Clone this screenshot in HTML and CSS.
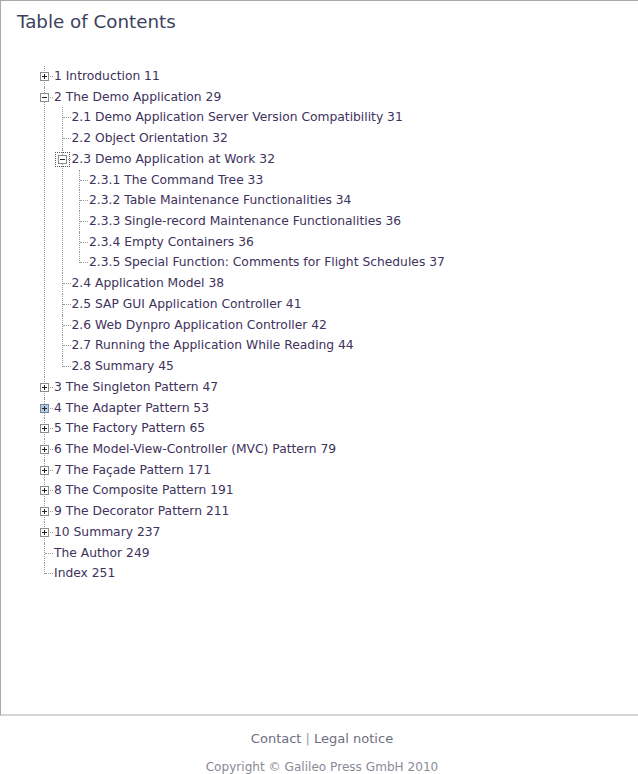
FILE: index.html
```html
<!DOCTYPE html>
<html>
<head>
<meta charset="utf-8">
<link rel="stylesheet" href="styles.css">
</head>
<body>
<div class="panel">
  <h1 class="title">Table of Contents</h1>
  <ul class="tree">
    <li><span class="toggle plus"></span><a class="row">1 Introduction 11</a></li>
    <li><span class="toggle minus"></span><a class="row">2 The Demo Application 29</a>
      <ul>
        <li><a class="row">2.1 Demo Application Server Version Compatibility 31</a></li>
        <li><a class="row">2.2 Object Orientation 32</a></li>
        <li><span class="toggle minus focus"></span><a class="row">2.3 Demo Application at Work 32</a>
          <ul>
            <li><a class="row">2.3.1 The Command Tree 33</a></li>
            <li><a class="row">2.3.2 Table Maintenance Functionalities 34</a></li>
            <li><a class="row">2.3.3 Single-record Maintenance Functionalities 36</a></li>
            <li><a class="row">2.3.4 Empty Containers 36</a></li>
            <li><a class="row">2.3.5 Special Function: Comments for Flight Schedules 37</a></li>
          </ul>
        </li>
        <li><a class="row">2.4 Application Model 38</a></li>
        <li><a class="row">2.5 SAP GUI Application Controller 41</a></li>
        <li><a class="row">2.6 Web Dynpro Application Controller 42</a></li>
        <li><a class="row">2.7 Running the Application While Reading 44</a></li>
        <li><a class="row">2.8 Summary 45</a></li>
      </ul>
    </li>
    <li><span class="toggle plus"></span><a class="row">3 The Singleton Pattern 47</a></li>
    <li><span class="toggle plus hover"></span><a class="row">4 The Adapter Pattern 53</a></li>
    <li><span class="toggle plus"></span><a class="row">5 The Factory Pattern 65</a></li>
    <li><span class="toggle plus"></span><a class="row">6 The Model-View-Controller (MVC) Pattern 79</a></li>
    <li><span class="toggle plus"></span><a class="row">7 The Façade Pattern 171</a></li>
    <li><span class="toggle plus"></span><a class="row">8 The Composite Pattern 191</a></li>
    <li><span class="toggle plus"></span><a class="row">9 The Decorator Pattern 211</a></li>
    <li><span class="toggle plus"></span><a class="row">10 Summary 237</a></li>
    <li><a class="row">The Author 249</a></li>
    <li><a class="row">Index 251</a></li>
  </ul>
</div>
<div class="footer">
  <div class="links"><a>Contact</a> <span class="sep">|</span> <a>Legal notice</a></div>
  <div class="copy">Copyright © Galileo Press GmbH 2010</div>
</div>
</body>
</html>
```
FILE: styles.css
```css
html, body {
  margin: 0;
  padding: 0;
  background: #ffffff;
  font-family: "DejaVu Sans", Verdana, sans-serif;
}

.panel {
  box-sizing: border-box;
  height: 716px;
  border-top: 1px solid #a9a9a9;
  border-left: 1px solid #a9a9a9;
  border-bottom: 2px solid #d6d6d6;
  padding: 7px 0 0 16px;
}

.title {
  margin: 0;
  font-size: 18.3px;
  font-weight: normal;
  line-height: 27px;
  color: #3b4260;
}

.tree {
  list-style: none;
  margin: 31px 0 0 27px;
  padding: 0;
}

.tree ul {
  list-style: none;
  margin: 0;
  padding: 0 0 0 7.5px;
}

.tree li {
  position: relative;
  padding-left: 10px;
}

.tree li::before {
  content: "";
  position: absolute;
  left: 0;
  top: 0;
  bottom: 0;
  border-left: 1px dotted #9a9a9a;
}

.tree li:last-child::before {
  bottom: auto;
  height: 10.5px;
}

.tree li::after {
  content: "";
  position: absolute;
  left: 1px;
  top: 10px;
  width: 8px;
  border-top: 1px dotted #9a9a9a;
}

.row {
  display: block;
  height: 20.72px;
  line-height: 20.72px;
  font-size: 12.3px;
  color: #40325c;
  white-space: nowrap;
}

.toggle {
  position: absolute;
  z-index: 1;
  left: -4px;
  top: 6px;
  width: 7px;
  height: 7px;
  border: 1px solid #8c8c8c;
  background: #ffffff;
}

.toggle::before {
  content: "";
  position: absolute;
  left: 1px;
  top: 3px;
  width: 5px;
  height: 1px;
  background: #222;
}

.toggle.plus::after {
  content: "";
  position: absolute;
  left: 3px;
  top: 1px;
  width: 1px;
  height: 5px;
  background: #222;
}

.toggle.hover {
  background: #b9cce4;
  border-color: #6f86a6;
}

.toggle.focus {
  outline: 1px dotted #555;
  outline-offset: 2px;
}

.footer {
  text-align: center;
  padding: 13px 0 0 6px;
  color: #6e6e80;
}

.footer .links {
  font-size: 13px;
  line-height: 20px;
}

.footer .sep {
  color: #9a9aa8;
}

.footer .copy {
  margin-top: 8px;
  font-size: 12.1px;
  line-height: 20px;
  color: #8a8a96;
}
```
